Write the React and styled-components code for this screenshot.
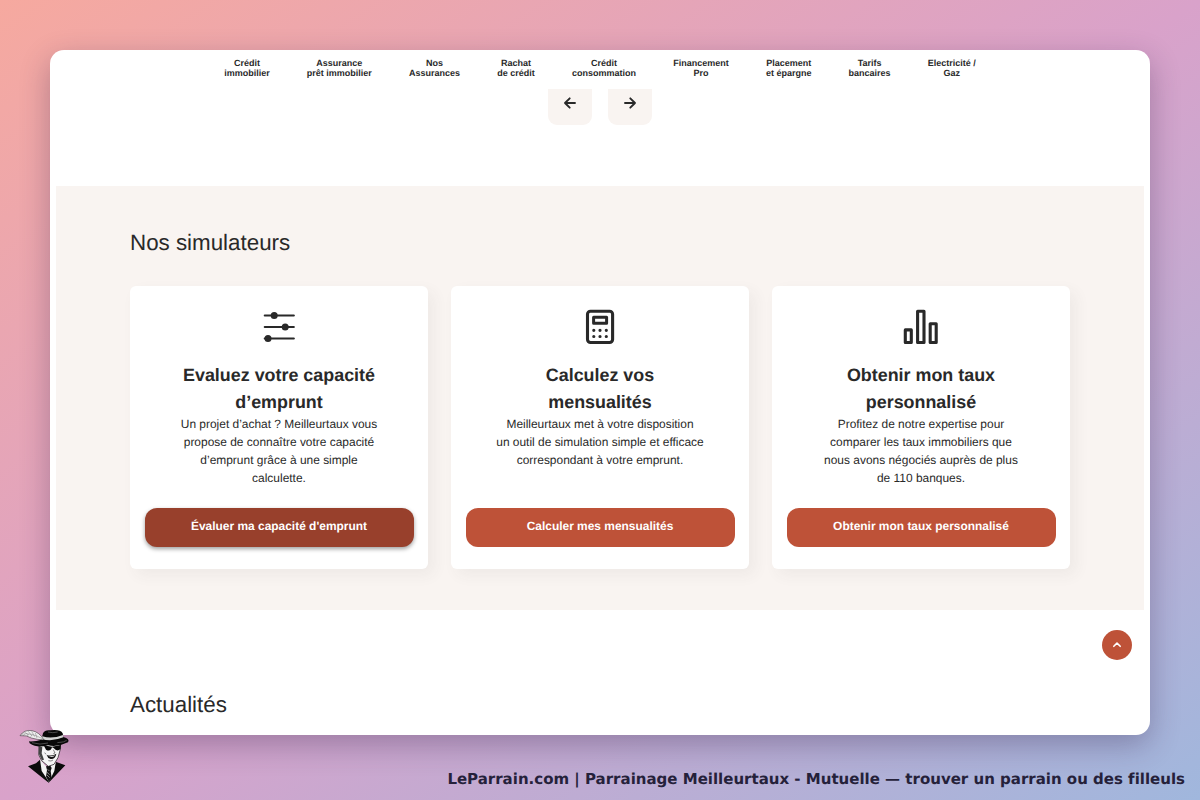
import React from 'react';
import styled, { createGlobalStyle } from 'styled-components';

const GlobalStyle = createGlobalStyle`
  * {
    box-sizing: border-box;
  }
  body {
    margin: 0;
    overflow: hidden;
    font-family: 'Liberation Sans', Arial, sans-serif;
    color: #292929;
    text-rendering: geometricPrecision;
  }
`;

const Backdrop = styled.div`
  position: relative;
  width: 1200px;
  height: 800px;
  padding: 50px 50px 0;
  background: linear-gradient(to bottom right, #f6a99f 0%, #d9a2ca 50%, #a0b7dd 100%);
`;

const Window = styled.div`
  display: flex;
  flex-direction: column;
  height: 685px;
  padding: 0 6px;
  border-radius: 14px;
  background: #fff;
  box-shadow: 0 10px 30px rgba(50, 30, 70, 0.32);
  overflow: hidden;
`;

const Nav = styled.nav`
  display: flex;
  justify-content: center;
  gap: 37.2px;
  height: 39px;
  padding-top: 8px;
`;

const NavItem = styled.a`
  font-size: 9px;
  font-weight: 700;
  line-height: 10.4px;
  text-align: center;
  white-space: pre-line;
`;

const Arrows = styled.div`
  display: flex;
  justify-content: center;
  gap: 15.5px;
  height: 96.5px;
`;

const ArrowBtn = styled.button`
  display: flex;
  justify-content: center;
  width: 44.5px;
  height: 36px;
  padding: 7px 0 0;
  border: none;
  border-radius: 0 0 9px 9px;
  background: #f9f4f1;
`;

const Simulators = styled.section`
  height: 424.5px;
  padding: 43px 74px 0;
  background: #f9f4f1;
`;

const Title = styled.h2`
  margin: 0;
  font-size: 22.35px;
  font-weight: 400;
  line-height: 27px;
`;

const Cards = styled.div`
  display: grid;
  grid-template-columns: repeat(3, 298px);
  gap: 23px;
  margin-top: 30.8px;
`;

const Card = styled.div`
  display: flex;
  flex-direction: column;
  align-items: center;
  height: 283px;
  padding: 18.7px 14.5px 22.5px;
  border-radius: 6px;
  background: #fff;
  box-shadow: 6px 6px 15px rgba(60, 70, 70, 0.06);
`;

const CardTitle = styled.h3`
  margin: 15px 0 0;
  font-size: 17.9px;
  font-weight: 700;
  line-height: 26.6px;
  text-align: center;
  white-space: pre-line;
`;

const CardText = styled.p`
  margin: -0.5px 0 0;
  font-size: 11.95px;
  line-height: 18px;
  text-align: center;
  white-space: pre-line;
`;

const CardBtn = styled.button`
  width: 269px;
  height: 39px;
  margin-top: auto;
  padding: 0 0 3px;
  border: none;
  border-radius: 12px;
  background: ${(props) => (props.$active ? '#98402c' : '#be5238')};
  box-shadow: ${(props) =>
    props.$active ? '0 2px 4px rgba(0, 0, 0, 0.38)' : 'none'};
  color: #fff;
  font-family: inherit;
  font-size: 11.95px;
  font-weight: 700;
  text-rendering: inherit;
`;

const News = styled.section`
  padding: 81px 74px 0;
`;

const TopBtn = styled.button`
  position: absolute;
  top: 630.4px;
  left: 1102px;
  display: flex;
  justify-content: center;
  align-items: center;
  width: 30px;
  height: 30px;
  padding: 0;
  border: none;
  border-radius: 50%;
  background: #be5238;
`;

const Mascot = styled.svg`
  position: absolute;
  top: 720px;
  left: 10px;
`;

const Caption = styled.div`
  position: absolute;
  right: 15px;
  bottom: 12px;
  color: #25213a;
  font-family: 'DejaVu Sans', sans-serif;
  font-size: 15px;
  font-weight: 700;
  line-height: 18px;
  white-space: nowrap;
  font-variant-ligatures: none;
`;

const navItems = [
  'Crédit\nimmobilier',
  'Assurance\nprêt immobilier',
  'Nos\nAssurances',
  'Rachat\nde crédit',
  'Crédit\nconsommation',
  'Financement\nPro',
  'Placement\net épargne',
  'Tarifs\nbancaires',
  'Electricité /\nGaz',
];

const SlidersIcon = () => (
  <svg width='42' height='42' viewBox='0 0 42 42' fill='#292929'>
    <path
      d='M6.8 10.5h29M6.8 22h29M6.8 33.5h29'
      stroke='#292929'
      strokeWidth='2.2'
      strokeLinecap='round'
    />
    <circle cx='16.2' cy='10.5' r='3.5' />
    <circle cx='27.2' cy='22' r='3.5' />
    <circle cx='10' cy='33.5' r='3.5' />
  </svg>
);

const CalculatorIcon = () => (
  <svg width='42' height='42' viewBox='0 0 42 42' fill='none' stroke='#292929'>
    <rect x='8.5' y='6.2' width='25.1' height='31.3' rx='3' strokeWidth='3.1' />
    <rect x='14.6' y='12.3' width='13' height='6' strokeWidth='3' strokeLinejoin='round' />
    <path
      d='M14.8 25.3h.01M21 25.3h.01M27.3 25.3h.01M14.8 31.5h.01M21 31.5h.01M27.3 31.5h.01'
      strokeWidth='3.2'
      strokeLinecap='round'
    />
  </svg>
);

const BarsIcon = () => (
  <svg width='42' height='42' viewBox='0 0 42 42' fill='none' stroke='#292929' strokeWidth='3.1' strokeLinejoin='round'>
    <path d='M5.3 24.9h6v12.6h-6zM17.6 6.2H24v31.3h-6.4zM30.2 18.8h6v18.7h-6z' />
  </svg>
);

const cards = [
  {
    Icon: SlidersIcon,
    title: 'Evaluez votre capacité\nd’emprunt',
    text:
      'Un projet d’achat ? Meilleurtaux vous\npropose de connaître votre capacité\nd’emprunt grâce à une simple\ncalculette.',
    button: "Évaluer ma capacité d'emprunt",
    active: true,
  },
  {
    Icon: CalculatorIcon,
    title: 'Calculez vos\nmensualités',
    text:
      'Meilleurtaux met à votre disposition\nun outil de simulation simple et efficace\ncorrespondant à votre emprunt.',
    button: 'Calculer mes mensualités',
  },
  {
    Icon: BarsIcon,
    title: 'Obtenir mon taux\npersonnalisé',
    text:
      'Profitez de notre expertise pour\ncomparer les taux immobiliers que\nnous avons négociés auprès de plus\nde 110 banques.',
    button: 'Obtenir mon taux personnalisé',
  },
];

const Arrow = ({ d }) => (
  <svg
    width='14'
    height='14'
    viewBox='0 0 14 14'
    fill='none'
    stroke='#292929'
    strokeWidth='1.9'
    strokeLinecap='round'
    strokeLinejoin='round'
  >
    <path d={d} />
  </svg>
);

const Gangster = () => (
  <Mascot width='80' height='70' viewBox='0 0 240 210'>
    <path d='M54 139L78 130L90 119L110 150L127 142L139 126L166 136L116 188Z' fill='#0b0b0b' />
    <path d='M90 118L112 144L130 132L137 128L133 153L117 186L95 153Z' fill='#f2f2f2' />
    <path d='M108 139l13-2 4 7-3 9 3 20-8 13-9-16 3-20z' fill='#111' />
    <path d='M113 148l5 5M111 157l8 7M111 165l8 8' stroke='#bbb' strokeWidth='2' />
    <path d='M87 72L86 104L95 122L115 139L132 133L144 113L152 84L148 68Z' fill='#f5f5f5' stroke='#111' strokeWidth='2' />
    <path d='M87 78L97 82L95 100L102 119L96 121L87 103Z' fill='#444' />
    <path d='M101 76L126 80L153 75L151 88Q140 96 131 84L126 82Q121 97 108 89Z' fill='#080808' />
    <path d='M110 105Q125 110 139 101Q136 118 122 117Q113 115 110 105Z' fill='#111' />
    <path d='M115 108Q126 111 136 105Q128 116 115 108Z' fill='#fff' />
    <path d='M130 89l5 10-5 2M104 98l4 5M115 122q9 3 14-2' fill='none' stroke='#222' strokeWidth='1.6' />
    <path d='M57 64Q77 65 94 59L99 40Q104 29 121 31Q151 27 158 40L160 51Q181 57 174 67Q144 82 114 76Q82 86 59 70Z' fill='#080808' />
    <path d='M97 49Q126 58 159 45L160 52Q127 66 94 57Z' fill='#d4d4d4' />
    <path d='M66 68Q90 76 114 69M142 68Q164 67 170 61M114 36q14 4 29 0' fill='none' stroke='#777' strokeWidth='1.8' />
    <path d='M30 47Q43 28 66 32Q88 36 102 60Q81 59 64 54Q51 45 30 47Z' fill='#eee' stroke='#222' strokeWidth='1.5' />
    <path d='M35 43Q61 36 99 57M43 36l13 9M54 33l11 14M65 34l9 16M76 39l5 15M44 43l-5 5M55 43l-4 5M67 44l-5 6' fill='none' stroke='#666' strokeWidth='1.2' />
  </Mascot>
);

const App = () => {
  return (
    <Backdrop>
      <GlobalStyle />
      <Window>
        <Nav>
          {navItems.map((item) => (
            <NavItem key={item}>{item}</NavItem>
          ))}
        </Nav>
        <Arrows>
          <ArrowBtn>
            <Arrow d='M12 7H2M6.7 2.3L2 7l4.7 4.7' />
          </ArrowBtn>
          <ArrowBtn>
            <Arrow d='M2 7h10M7.3 2.3L12 7l-4.7 4.7' />
          </ArrowBtn>
        </Arrows>
        <Simulators>
          <Title>Nos simulateurs</Title>
          <Cards>
            {cards.map(({ Icon, title, text, button, active }) => (
              <Card key={title}>
                <Icon />
                <CardTitle>{title}</CardTitle>
                <CardText>{text}</CardText>
                <CardBtn $active={active}>{button}</CardBtn>
              </Card>
            ))}
          </Cards>
        </Simulators>
        <News>
          <Title>Actualités</Title>
        </News>
      </Window>
      <TopBtn>
        <svg width='10' height='8' viewBox='0 0 10 8' fill='none' stroke='#fff' strokeWidth='1.6' strokeLinecap='round' strokeLinejoin='round'>
          <path d='M1.8 5.3L5 2.1l3.2 3.2' />
        </svg>
      </TopBtn>
      <Gangster />
      <Caption>
        LeParrain.com | Parrainage Meilleurtaux - Mutuelle — trouver un parrain ou des filleuls
      </Caption>
    </Backdrop>
  );
};

export default App;
